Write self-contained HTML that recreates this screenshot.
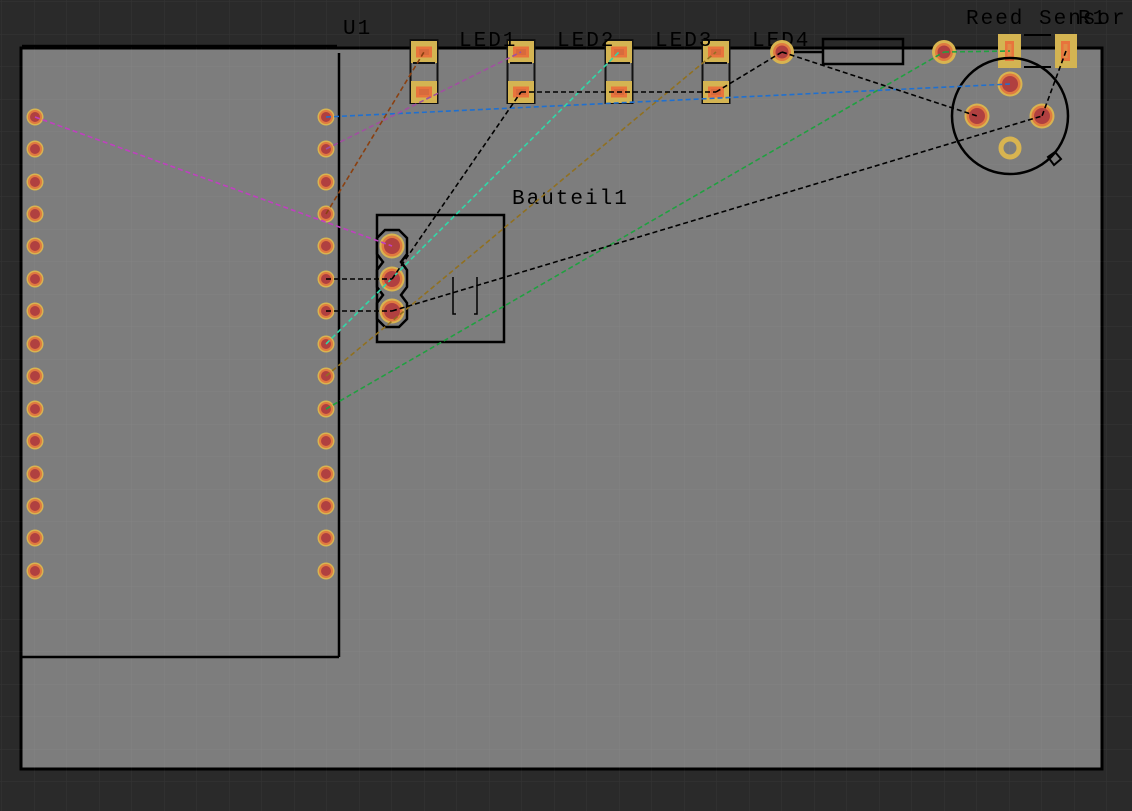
<!DOCTYPE html>
<html><head><meta charset="utf-8"><style>
html,body{margin:0;padding:0;background:#2a2a2a;width:1132px;height:811px;overflow:hidden}
text{font-family:"Liberation Mono","DejaVu Sans Mono",monospace;font-size:21px;fill:#000;letter-spacing:2px}
</style></head><body>
<svg width="1132" height="811" viewBox="0 0 1132 811" xmlns="http://www.w3.org/2000/svg">
<defs>
<pattern id="g" x="2" y="2" width="32.5" height="32.5" patternUnits="userSpaceOnUse">
<path d="M32.5 0V32.5M0 32.5H32.5" stroke="rgba(255,255,255,0.05)" stroke-width="1" fill="none"/>
</pattern>
<g id="pin"><circle r="8.5" fill="#d8b450"/><circle r="7" fill="#e07a40"/><circle r="5" fill="#b04040"/></g>
<g id="bp"><circle r="12.5" fill="#d8b450"/><circle r="10.5" fill="#e07a40"/><circle r="8" fill="#b04040"/></g>
<g id="sp"><rect x="-13" y="-11" width="26" height="22" fill="#d4b452"/><rect x="-8" y="-5.5" width="16" height="11" fill="#e8743c"/><rect x="-5" y="-3" width="10" height="6" fill="#d86a3c"/></g>
<g id="led"><rect x="-13.5" y="-12" width="27" height="63" fill="none" stroke="#111" stroke-width="2"/><use href="#sp"/><use href="#sp" y="40"/><line x1="-11" y1="11" x2="11" y2="11" stroke="#111" stroke-width="2"/></g>
</defs>
<rect width="1132" height="811" fill="#2a2a2a"/>
<rect x="21" y="48" width="1081" height="721" fill="#7d7d7d" stroke="#000" stroke-width="3"/>
<rect width="1132" height="811" fill="url(#g)"/>
<path d="M22 46H337M339 53V657M22 657H339" stroke="#000" stroke-width="2.5" fill="none"/>
<text x="343" y="34">U1</text>
<g>
<use href="#pin" x="35" y="117"/><use href="#pin" x="35" y="149"/><use href="#pin" x="35" y="182"/><use href="#pin" x="35" y="214"/><use href="#pin" x="35" y="246"/><use href="#pin" x="35" y="279"/><use href="#pin" x="35" y="311"/><use href="#pin" x="35" y="344"/><use href="#pin" x="35" y="376"/><use href="#pin" x="35" y="409"/><use href="#pin" x="35" y="441"/><use href="#pin" x="35" y="474"/><use href="#pin" x="35" y="506"/><use href="#pin" x="35" y="538"/><use href="#pin" x="35" y="571"/>
<use href="#pin" x="326" y="117"/><use href="#pin" x="326" y="149"/><use href="#pin" x="326" y="182"/><use href="#pin" x="326" y="214"/><use href="#pin" x="326" y="246"/><use href="#pin" x="326" y="279"/><use href="#pin" x="326" y="311"/><use href="#pin" x="326" y="344"/><use href="#pin" x="326" y="376"/><use href="#pin" x="326" y="409"/><use href="#pin" x="326" y="441"/><use href="#pin" x="326" y="474"/><use href="#pin" x="326" y="506"/><use href="#pin" x="326" y="538"/><use href="#pin" x="326" y="571"/>
</g>
<use href="#led" x="424" y="52"/><use href="#led" x="521" y="52"/><use href="#led" x="619" y="52"/><use href="#led" x="716" y="52"/>
<text x="459" y="46">LED1</text><text x="557" y="46">LED2</text><text x="655" y="46">LED3</text><text x="752" y="46">LED4</text>
<rect x="823" y="39" width="80" height="25" fill="none" stroke="#000" stroke-width="2.5"/>
<line x1="790" y1="52" x2="823" y2="52" stroke="#000" stroke-width="2.5"/>
<g><circle cx="782" cy="52" r="12" fill="#d8b450"/><circle cx="782" cy="52" r="9" fill="#e07a40"/><circle cx="782" cy="52" r="6.5" fill="#b04040"/></g>
<g><circle cx="944" cy="52" r="12" fill="#d8b450"/><circle cx="944" cy="52" r="9" fill="#e07a40"/><circle cx="944" cy="52" r="6.5" fill="#b04040"/></g>
<rect x="998" y="34" width="23" height="34" fill="#d4b452"/><rect x="1005" y="41" width="9" height="20" fill="#e8743c"/><rect x="1007.5" y="44" width="4" height="14" fill="#d4b452" opacity=".4"/>
<rect x="1055" y="34" width="22" height="34" fill="#d4b452"/><rect x="1061" y="41" width="9" height="20" fill="#e8743c"/><rect x="1063.5" y="44" width="4" height="14" fill="#d4b452" opacity=".4"/>
<path d="M1024 35H1051M1024 67H1051" stroke="#000" stroke-width="2"/>
<circle cx="1010" cy="116" r="58" fill="none" stroke="#000" stroke-width="2.5"/>
<path d="M1048 157L1055 152L1061 159L1054 165Z" fill="none" stroke="#000" stroke-width="2"/>
<use href="#bp" x="1010" y="84"/><use href="#bp" x="977" y="116"/><use href="#bp" x="1042" y="116"/>
<circle cx="1010" cy="148" r="9" fill="none" stroke="#d8b450" stroke-width="5"/>
<text x="966" y="24">Reed Sensor</text><text x="1078" y="24">R1</text>
<rect x="377" y="215" width="127" height="127" fill="none" stroke="#000" stroke-width="2.5"/>
<path d="M453 277V314H456M477 277V314H474" stroke="#000" stroke-width="1.5" fill="none"/>
<path d="M385 230H399L407 238V254L401 262L407 270V287L401 295L407 303V319L399 327H385L377 319V303L383 295L377 287V270L383 262L377 254V238Z" fill="none" stroke="#000" stroke-width="2.5"/>
<use href="#bp" x="392" y="246"/><use href="#bp" x="392" y="279"/><use href="#bp" x="392" y="311"/>
<text x="512" y="204">Bauteil1</text>
<g stroke-width="1.6" stroke-dasharray="5,3" fill="none">
<line x1="35" y1="117" x2="392" y2="246" stroke="#c040c0"/>
<line x1="326" y1="117" x2="1010" y2="84" stroke="#1f70d0"/>
<line x1="326" y1="149" x2="521" y2="52" stroke="#a050a0"/>
<line x1="326" y1="214" x2="424" y2="52" stroke="#8a4010"/>
<line x1="326" y1="344" x2="619" y2="52" stroke="#30d8a8"/>
<line x1="326" y1="376" x2="716" y2="52" stroke="#907020"/>
<line x1="326" y1="409" x2="944" y2="52" stroke="#20a040"/>
<line x1="944" y1="52" x2="1010" y2="51" stroke="#20a040"/>
<g stroke="#000">
<line x1="326" y1="279" x2="392" y2="279"/>
<line x1="326" y1="311" x2="392" y2="311"/>
<line x1="392" y1="279" x2="521" y2="92"/>
<line x1="392" y1="311" x2="1042" y2="116"/>
<line x1="521" y1="92" x2="716" y2="92"/>
<line x1="716" y1="92" x2="782" y2="52"/>
<line x1="782" y1="52" x2="977" y2="116"/>
<line x1="1066" y1="51" x2="1042" y2="116"/>
</g>
</g>
</svg>
</body></html>
